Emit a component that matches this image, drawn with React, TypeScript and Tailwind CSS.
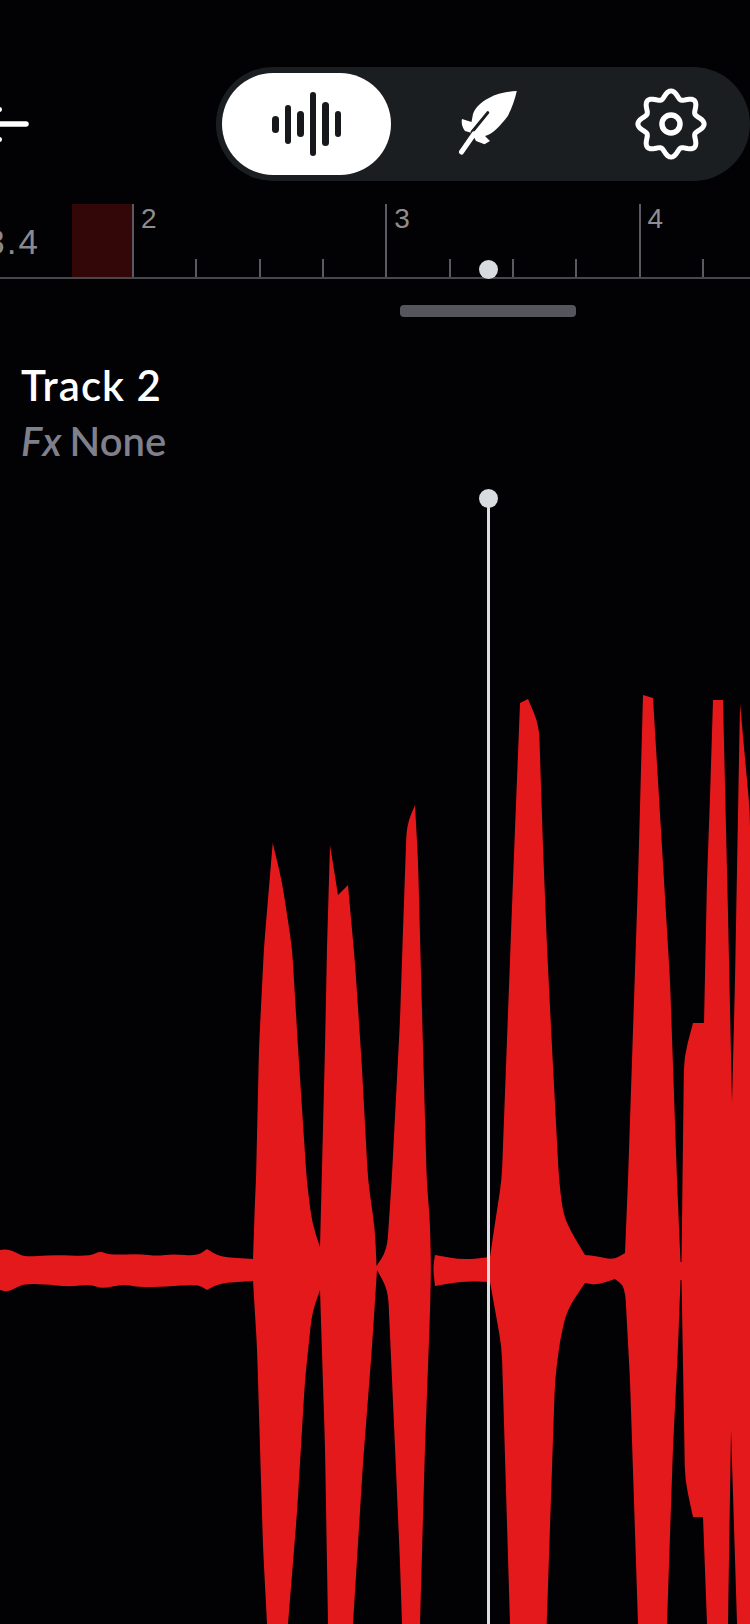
import React from 'react';

// outline of the waveform, traced from left to right along the top, then back along the bottom
const WAVE_LEFT =
  'M0 1250 L8 1249 L17 1253 L25 1257 L50 1255 L90 1256 L100 1251 L110 1255 L140 1254 L157 1256 L173 1254 L197 1256 L207 1249 L220 1257 L253 1259 ' +
  'L255 1200 L256 1180 L259 1047 L264 947 L272.7 843 L281.7 880 L292 947 L298 1047 L306.7 1180 L312 1223 L320 1247 ' +
  'L321.7 1180 L325 1047 L327 947 L330 845 L338 895 L348 885 L355 963 L361.7 1063 L368 1180 L375 1230 L376.5 1266 ' +
  'L387 1250 L391.7 1180 L400 1020 L403 930 L406.7 825 L415 805 L418 860 L421.7 1000 L426.7 1180 L430 1223 L431 1268 ' +
  'L430 1313 L425 1447 L420 1624 L402 1624 L400 1563 L395 1447 L388 1290 L377 1270 ' +
  'L372 1347 L363 1463 L353 1624 L328 1624 L325 1447 L320 1290 ' +
  'L312 1313 L305 1380 L297 1513 L288 1624 L267 1624 L263 1547 L257 1347 L253 1281 ' +
  'L220 1283 L207 1290 L197 1284 L167 1287 L137 1287 L123 1284 L102 1289 L90 1284 L70 1287 L43 1284 L25 1284 L17 1287 L8 1292 L0 1290 Z';

const WAVE_RIGHT =
  'M433 1268 L435 1255 L463 1260 L490 1257 L495 1223 L501.7 1180 L508 1013 L513 880 L520 703 L528 699 L539 725 L543 847 L547 947 L552 1047 L559 1180 ' +
  'L563 1213 L570 1230 L585 1255 L597 1256 L613 1260 L625 1253 L628 1180 L638 880 L643 695 L653 698 L662 847 L670 980 L677 1180 L680.5 1262 ' +
  'L681.5 1262 L684 1057 L693 1023 L704 1023 L707 880 L710 797 L713 700 L723 700 L728 913 L732 1103 L735 980 L740 703 L750 813 L750 1624 ' +
  'L737 1624 L731 1430 L728 1624 L707 1624 L703 1517 L693 1517 L685 1480 L681.5 1280 L680.5 1280 L678 1347 L673 1447 L667 1624 L638 1624 L630 1380 L625 1287 ' +
  'L615 1279 L597 1285 L585 1283 L567 1310 L560 1340 L555 1380 L546.7 1624 L510 1624 L501.7 1347 L490 1282 L463 1281 L435 1286 Z';

// soften the shallow bends of a traced outline, keeps the sharp peaks as they are
const soften = (d: string) => {
  const pts = d
    .replace(/[MLZ]/g, ' ')
    .trim()
    .split(/\s+/)
    .map(Number)
    .reduce<number[][]>((acc, v, i) => {
      if (i % 2 === 0) acc.push([v]);
      else acc[acc.length - 1].push(v);
      return acc;
    }, []);
  let out = '';
  pts.forEach((p, i) => {
    const a = pts[(i - 1 + pts.length) % pts.length];
    const b = pts[(i + 1) % pts.length];
    const la = Math.hypot(p[0] - a[0], p[1] - a[1]);
    const lb = Math.hypot(b[0] - p[0], b[1] - p[1]);
    const cos = ((p[0] - a[0]) * (b[0] - p[0]) + (p[1] - a[1]) * (b[1] - p[1])) / (la * lb);
    const cmd = i === 0 ? 'M' : 'L';
    if (cos < 0.6 || p[1] >= 1624) {
      out += `${cmd}${p[0]} ${p[1]} `;
      return;
    }
    const ca = Math.min(14, la * 0.5) / la;
    const cb = Math.min(14, lb * 0.5) / lb;
    out += `${cmd}${p[0] - (p[0] - a[0]) * ca} ${p[1] - (p[1] - a[1]) * ca} `;
    out += `Q${p[0]} ${p[1]} ${p[0] + (b[0] - p[0]) * cb} ${p[1] + (b[1] - p[1]) * cb} `;
  });
  return out + 'Z';
};

// scalloped 8-tooth gear outline
const gearPath = () => {
  const pts: string[] = [];
  for (let i = 0; i < 160; i++) {
    const t = (i / 160) * Math.PI * 2;
    const r = 29.5 + 3.6 * Math.cos(8 * (t + Math.PI / 2));
    pts.push(`${(36 + r * Math.cos(t)).toFixed(2)} ${(36 + r * Math.sin(t)).toFixed(2)}`);
  }
  return 'M' + pts.join(' L') + ' Z';
};

function BarsIcon() {
  const bars = [17, 39, 26, 64, 44, 26];
  return (
    <div className="flex items-center gap-[6px]">
      {bars.map((h, i) => (
        <span key={i} className="w-[6.5px] rounded-full bg-[#17181b]" style={{ height: h }} />
      ))}
    </div>
  );
}

function FeatherIcon() {
  return (
    <svg width="64" height="72" viewBox="0 0 64 72" className="shrink-0">
      <path
        d="M59.8 3 C50 3.5 40 5.5 32 10 C24 14 18 20 16 26 L14.5 34 L5 31 C4 35 5.5 40 8 43 L15 45 L16 47 L19 53 L27.5 56.3 L33 53 L28 48 C36 46 43 38 50.8 28 C55 20 58 11 59.8 3 Z"
        fill="#ffffff"
      />
      <path d="M30.8 24.6 L15 44" stroke="#1b1e21" strokeWidth="3" strokeLinecap="round" fill="none" />
      <path d="M17 46 L4.5 64" stroke="#ffffff" strokeWidth="5" strokeLinecap="round" fill="none" />
    </svg>
  );
}

function GearIcon() {
  return (
    <svg width="72" height="72" viewBox="0 0 72 72" fill="none" stroke="#ffffff" strokeWidth="5" className="shrink-0">
      <path d={gearPath()} strokeLinejoin="round" />
      <circle cx="36" cy="36" r="9" strokeWidth="5.5" />
    </svg>
  );
}

function RulerBar({ label }: { label: string }) {
  return (
    <div className="flex h-full w-[253.3px] shrink-0 items-end">
      <div className="flex h-full w-1/4 items-start border-l-2 border-[#5a5a60] pl-[7px] font-['Liberation_Sans',sans-serif] text-[28px] leading-[30px] text-[#8d8d92]">
        {label}
      </div>
      <div className="h-[18px] w-1/4 border-l-2 border-[#5a5a60]" />
      <div className="h-[18px] w-1/4 border-l-2 border-[#5a5a60]" />
      <div className="h-[18px] w-1/4 border-l-2 border-[#5a5a60]" />
    </div>
  );
}

export default function App() {
  return (
    <div className="relative h-[1624px] w-[750px] overflow-hidden bg-[#020104] font-['Lato',sans-serif]">
      {/* Top bar */}
      <div className="flex items-center justify-between pt-[67px]">
        <svg width="30" height="40" viewBox="0 0 30 40" fill="none" stroke="#ffffff" strokeWidth="5.5" strokeLinecap="round">
          <path d="M-6 20 H26" />
          <circle cx="-0.5" cy="5.5" r="1.5" fill="#ffffff" strokeWidth="2" />
          <circle cx="-0.5" cy="35.5" r="1.5" fill="#ffffff" strokeWidth="2" />
        </svg>
        <div className="flex h-[114px] w-[534px] items-center rounded-full bg-[#1b1e21] p-[6px]">
          <div className="flex h-[102px] w-[169px] items-center justify-center rounded-full bg-white">
            <BarsIcon />
          </div>
          <div className="ml-[66px]">
            <FeatherIcon />
          </div>
          <div className="ml-[114px]">
            <GearIcon />
          </div>
        </div>
      </div>

      {/* Ruler */}
      <div className="mt-[23px] flex h-[75px] items-end overflow-hidden border-b-2 border-[#47474c]">
        <div className="flex h-full w-[132px] shrink-0 justify-end">
          <span className="mt-[18px] mr-[32px] shrink-0 font-['Liberation_Sans',sans-serif] text-[35px] leading-[40px] tracking-[2px] font-light text-[#8a8a8e]">
            3.4
          </span>
          <div className="h-full w-[60px] shrink-0 bg-[#330607]" />
        </div>
        <RulerBar label="2" />
        <RulerBar label="3" />
        <RulerBar label="4" />
      </div>

      {/* Scroll handle */}
      <div className="mt-[26px] ml-[400px] h-[12px] w-[176px] rounded-[4px] bg-[#55555d]" />

      {/* Track label */}
      <div className="mt-[43px] pl-[21px]">
        <div className="text-[42px] leading-[50px] font-semibold tracking-[1px] text-white">Track 2</div>
        <div className="mt-[6px] flex items-baseline gap-[6px] text-[40px] leading-[50px] font-semibold text-[#7f808c]">
          <span className="tracking-[2px] italic">Fx</span>
          <span>None</span>
        </div>
      </div>

      {/* Waveform */}
      <svg className="absolute bottom-0 left-0" width="750" height="944" viewBox="0 680 750 944">
        <path d={soften(WAVE_LEFT)} fill="#e3191c" />
        <path d={soften(WAVE_RIGHT)} fill="#e3191c" />
      </svg>

      {/* Playhead */}
      <div className="absolute top-[260px] left-[478.5px] h-[19px] w-[19px] rounded-full bg-[#d8dce0]" />
      <div className="absolute top-[489px] left-[478.5px] h-[19px] w-[19px] rounded-full bg-[#d8dce0]" />
      <div className="absolute top-[498px] bottom-0 left-[486.5px] w-[3px] bg-[#dcdce0]" />
    </div>
  );
}
